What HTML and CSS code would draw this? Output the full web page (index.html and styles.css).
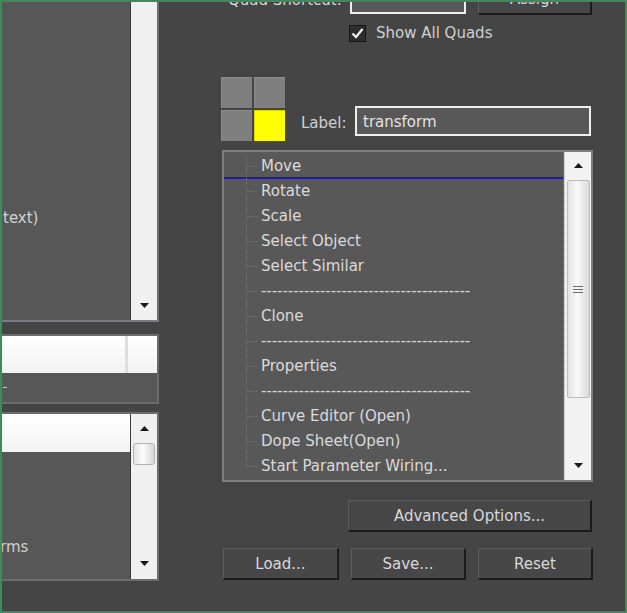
FILE: index.html
```html
<!DOCTYPE html>
<html>
<head>
<meta charset="utf-8">
<title>Quad Menu</title>
<link rel="stylesheet" href="styles.css">
</head>
<body>
<div class="frame">
  <div class="left">
    <div class="lbox1">
      <div class="lbody"><div class="ltext1">text)</div></div>
      <div class="vscroll vscroll1">
        <div class="arr arr-down1"><svg width="9" height="5" viewBox="0 0 9 5"><polygon points="0,0 9,0 4.5,5" fill="#1b1b1b"/></svg></div>
      </div>
    </div>
    <div class="lbox2">
      <div class="wrow2"><div class="cell-a"></div><div class="cell-b"></div></div>
      <div class="grow2"><span class="tick"></span></div>
    </div>
    <div class="lbox3">
      <div class="lbody">
        <div class="wrow3"></div>
        <div class="ltext3">rms</div>
      </div>
      <div class="vscroll vscroll3">
        <div class="arr arr-up3"><svg width="9" height="5" viewBox="0 0 9 5"><polygon points="4.5,0 9,5 0,5" fill="#1b1b1b"/></svg></div>
        <div class="thumb3"></div>
        <div class="arr arr-down3"><svg width="9" height="5" viewBox="0 0 9 5"><polygon points="0,0 9,0 4.5,5" fill="#1b1b1b"/></svg></div>
      </div>
    </div>
  </div>

  <div class="right">
    <div class="toprow">
      <div class="qs-label">Quad Shortcut:</div>
      <div class="field qs-input"></div>
      <button class="btn qs-btn">Assign</button>
    </div>

    <div class="checkrow">
      <span class="checkbox"><svg width="17" height="17" viewBox="0 0 17 17"><rect x="0.5" y="0.5" width="16" height="16" fill="#2e2e2e" stroke="#161616"/><path d="M3.5 8.5 L7 12 L13.5 4" fill="none" stroke="#f2f2f2" stroke-width="2.2"/></svg></span>
      <span class="check-text">Show All Quads</span>
    </div>

    <div class="quadrow">
      <div class="quad">
        <span class="q"></span><span class="q"></span><span class="q"></span><span class="q q-on"></span>
      </div>
      <div class="label-group">
        <span class="label-text">Label:</span>
        <div class="field label-input">transform</div>
      </div>
    </div>

    <div class="list">
      <ul class="items">
        <li class="item drop">Move</li>
        <li class="item">Rotate</li>
        <li class="item">Scale</li>
        <li class="item">Select Object</li>
        <li class="item">Select Similar</li>
        <li class="item sep">---------------------------------------</li>
        <li class="item">Clone</li>
        <li class="item sep">---------------------------------------</li>
        <li class="item">Properties</li>
        <li class="item sep">---------------------------------------</li>
        <li class="item">Curve Editor (Open)</li>
        <li class="item">Dope Sheet(Open)</li>
        <li class="item last">Start Parameter Wiring...</li>
      </ul>
      <div class="lscroll">
        <div class="sarr sarr-up"><svg width="9" height="5" viewBox="0 0 9 5"><polygon points="4.5,0 9,5 0,5" fill="#1b1b1b"/></svg></div>
        <div class="sthumb"><span class="grip"></span><span class="grip"></span><span class="grip"></span></div>
        <div class="sarr sarr-down"><svg width="9" height="5" viewBox="0 0 9 5"><polygon points="0,0 9,0 4.5,5" fill="#1b1b1b"/></svg></div>
      </div>
    </div>

    <button class="btn adv-btn">Advanced Options...</button>

    <div class="bottomrow">
      <button class="btn">Load...</button>
      <button class="btn">Save...</button>
      <button class="btn">Reset</button>
    </div>
  </div>
</div>
</body>
</html>
```

FILE: styles.css
```css
* { box-sizing: border-box; }
html, body { margin: 0; padding: 0; }
body {
  background: #454545;
  font-family: "DejaVu Sans", "Liberation Sans", sans-serif;
  font-size: 15px;
  color: #d8d8d8;
}
.frame {
  width: 627px;
  height: 613px;
  border: 2px solid #3d8b5c;
  background: #454545;
  overflow: hidden;
  display: flex;
  align-items: flex-start;
}

/* ---------- left column ---------- */
.left {
  width: 157px;
  flex: none;
  display: flex;
  flex-direction: column;
}
.lbox1 {
  height: 320px;
  display: flex;
  background: #575757;
  border-bottom: 2px solid #7b7a86;
}
.lbody { flex: 1; min-width: 0; }
.ltext1 {
  padding-top: 206px;
  padding-left: 1px;
  line-height: 20px;
  color: #d2d2d2;
}
.vscroll {
  width: 29px;
  flex: none;
  background: #f0f0f0;
  border-left: 1px solid #3c3c3c;
  border-right: 2px solid #6c6c6c;
  display: flex;
  flex-direction: column;
  align-items: center;
}
.vscroll1 { justify-content: flex-end; }
.arr { height: 20px; display: flex; align-items: center; justify-content: center; }
.arr-down1 { margin-bottom: 5px; }

.lbox2 {
  margin-top: 12px;
  height: 70px;
  border-top: 2px solid #6c6c6c;
  border-bottom: 2px solid #6c6c6c;
  border-right: 2px solid #6c6c6c;
  background: #575757;
  display: flex;
  flex-direction: column;
}
.wrow2 {
  height: 37px;
  display: flex;
  background: linear-gradient(#ffffff, #f2f2f2);
}
.cell-a { width: 126px; border-right: 3px solid #dedede; }
.cell-b { flex: 1; }
.grow2 { flex: 1; display: flex; align-items: center; }
.tick { width: 4px; height: 1px; background: #c8c8c8; margin-left: 1px; }

.lbox3 {
  margin-top: 8px;
  height: 169px;
  display: flex;
  background: #575757;
  border-top: 2px solid #6c6c6c;
  border-bottom: 2px solid #6c6c6c;
}
.wrow3 {
  height: 38px;
  background: linear-gradient(#ffffff, #f3f3f3);
}
.ltext3 {
  margin-top: 85px;
  margin-left: -2px;
  line-height: 20px;
  color: #cfcfcf;
}
.vscroll3 { width: 29px; }
.arr-up3 { margin-top: 4px; }
.thumb3 {
  margin-top: 5px;
  width: 22px;
  height: 22px;
  border: 1px solid #b4b4b4;
  border-radius: 3px;
  background: linear-gradient(to right, #e4e4e4, #fbfbfb 45%, #d6d6d6);
}
.arr-down3 { margin-top: auto; margin-bottom: 6px; }

/* ---------- right column ---------- */
.right {
  margin-left: 62px;
  margin-top: -18px;
  width: 372px;
  flex: none;
  display: flex;
  flex-direction: column;
}
.toprow {
  height: 31px;
  display: flex;
  align-items: center;
}
.qs-label { margin-left: 7px; width: 122px; white-space: nowrap; }
.field {
  border: 2px solid #efefef;
  background: #585858;
  color: #e2e2e2;
}
.qs-input { width: 116px; height: 29px; }
.btn {
  font-family: inherit;
  font-size: 15px;
  color: #d8d8d8;
  background: #474747;
  border-top: 1px solid #5c5c5c;
  border-left: 1px solid #5c5c5c;
  border-right: 2px solid #1b1b1b;
  border-bottom: 2px solid #1b1b1b;
  padding: 0;
  margin: 0;
}
.qs-btn { margin-left: 12px; width: 114px; height: 31px; }

.checkrow {
  margin-top: 9px;
  height: 18px;
  padding-left: 128px;
  display: flex;
  align-items: center;
}
.checkbox { display: flex; width: 17px; height: 17px; }
.check-text { margin-left: 10px; color: #d0d0d0; }

.quadrow {
  margin-top: 35px;
  display: flex;
  align-items: flex-end;
}
.quad {
  display: grid;
  grid-template-columns: 31px 31px;
  grid-template-rows: 31px 31px;
  gap: 2px;
}
.q {
  background: #7f7f7f;
  border-top: 1px solid #8c8c8c;
  border-left: 1px solid #8c8c8c;
}
.q-on { background: #ffff00; border-color: #d8d800; }
.label-group {
  margin-left: 16px;
  margin-bottom: 5px;
  display: flex;
  align-items: center;
}
.label-text { width: 46px; color: #d0d0d0; padding-top: 3px; }
.label-input {
  margin-left: 8px;
  width: 236px;
  height: 30px;
  padding-left: 6px;
  line-height: 29px;
}

.list {
  margin-top: 9px;
  margin-left: 1px;
  width: 371px;
  height: 332px;
  border: 2px solid #7d7d7d;
  background: #585858;
  display: flex;
}
.items {
  flex: 1;
  list-style: none;
  margin: 0;
  padding: 2px 0 0 0;
  border-right: 1px dotted #7a7a7a;
}
.item {
  position: relative;
  height: 25px;
  line-height: 25px;
  padding-left: 37px;
  white-space: nowrap;
  color: #dadada;
}
.item::before {
  content: "";
  position: absolute;
  left: 22px;
  top: 0;
  bottom: 0;
  border-left: 1px dotted #737373;
}
.item::after {
  content: "";
  position: absolute;
  left: 23px;
  top: 12px;
  width: 10px;
  border-top: 1px dotted #737373;
}
.item.last::before { bottom: 12px; }
.sep { color: #d4d4d4; letter-spacing: -0.05px; }
.drop { box-shadow: inset 0 -2px 0 #1c1ca4; }

.lscroll {
  width: 27px;
  flex: none;
  background: #f2f2f2;
  border-left: 1px solid #cfcfcf;
  display: flex;
  flex-direction: column;
  align-items: center;
}
.sarr { height: 26px; display: flex; align-items: center; justify-content: center; }
.sthumb {
  margin-top: 2px;
  width: 23px;
  height: 218px;
  border: 1px solid #bcbcbc;
  border-radius: 2px;
  background: linear-gradient(to right, #e2e2e2, #f9f9f9 45%, #d9d9d9);
  display: flex;
  flex-direction: column;
  align-items: center;
  justify-content: center;
  gap: 2px;
}
.grip { width: 10px; height: 1px; background: #6a6a6a; }
.sarr-down { margin-top: auto; margin-bottom: 2px; }

.adv-btn {
  margin-top: 18px;
  margin-left: 127px;
  width: 244px;
  height: 32px;
}
.bottomrow {
  margin-top: 16px;
  margin-left: 2px;
  width: 370px;
  display: grid;
  grid-template-columns: 116px 115px 115px;
  column-gap: 12px;
}
.bottomrow .btn { height: 32px; }
```
